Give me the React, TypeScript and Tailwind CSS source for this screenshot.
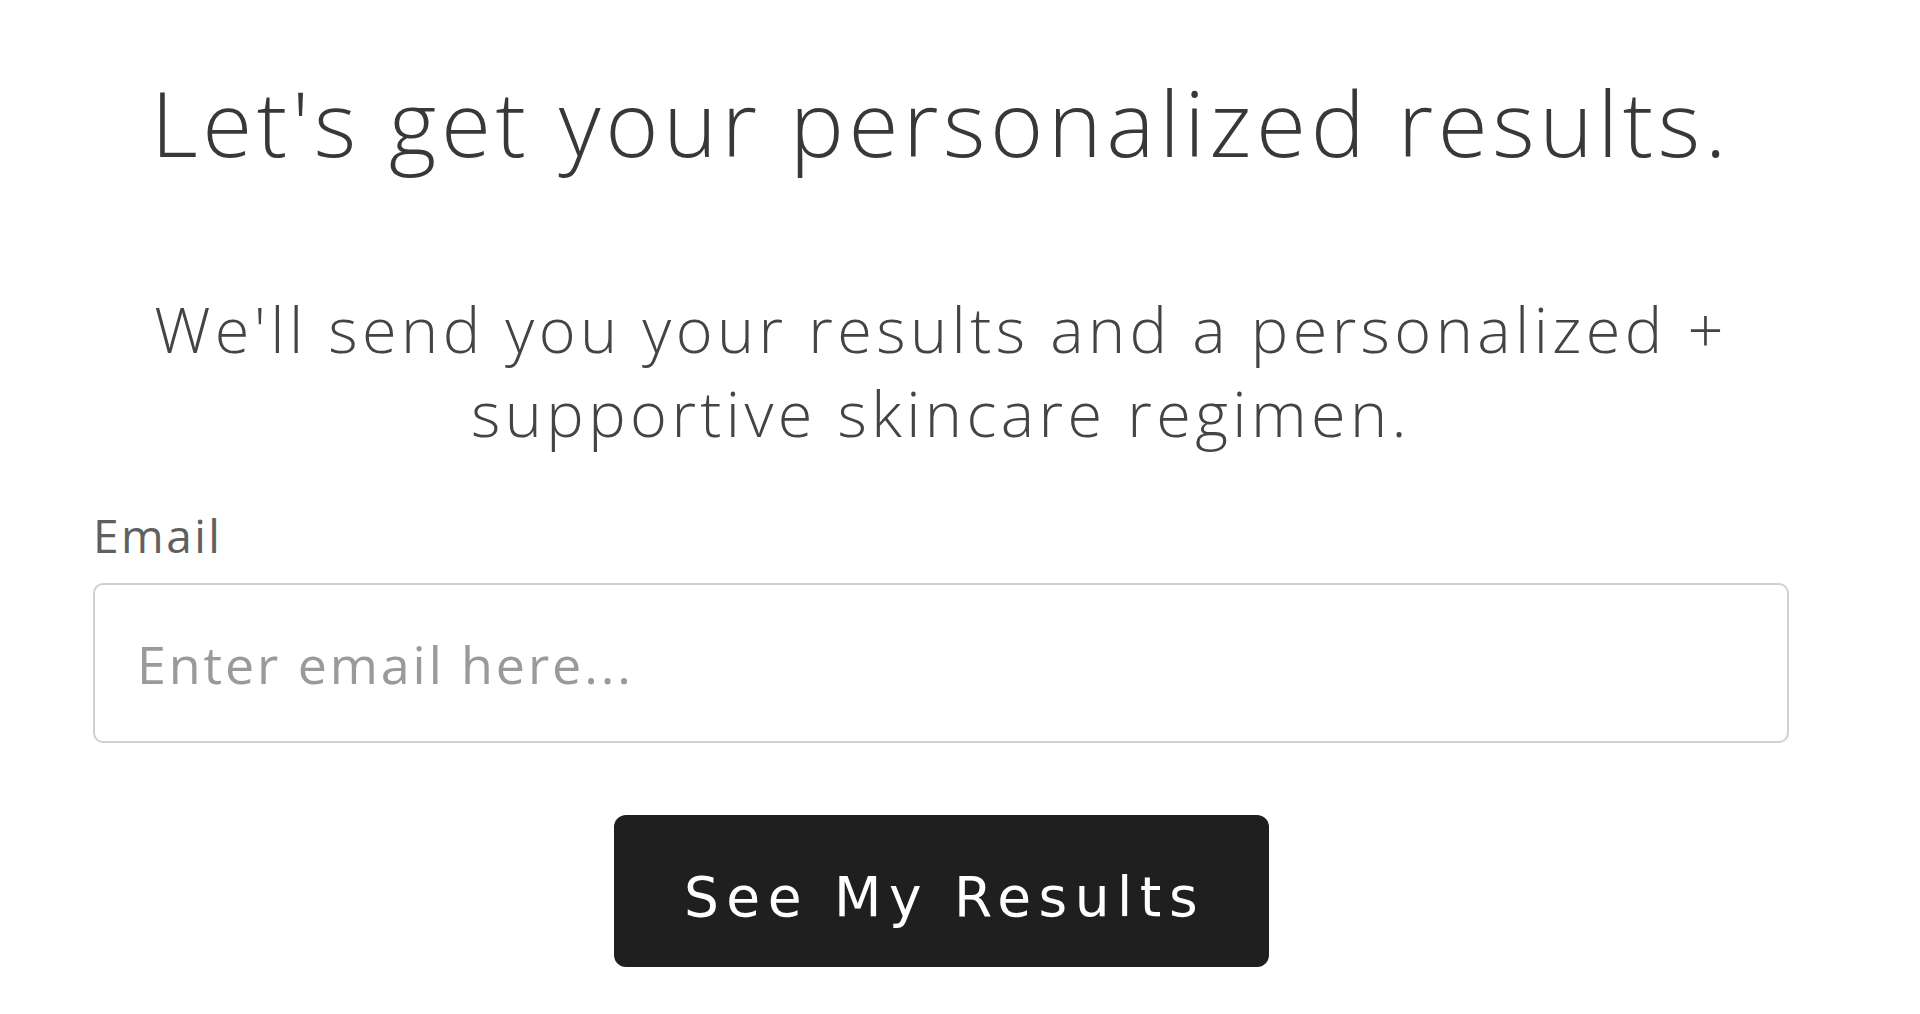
import React from "react";

export default function App() {
  return (
    <div className="min-h-[1014px] w-full bg-white" style={{ fontFamily: '"Open Sans", "Liberation Sans", sans-serif' }}>
      <div className="ml-[93px] w-[1696px] pt-[72px] flex flex-col">
        <h1 className="text-center text-[91px] leading-[100px] font-light tracking-[4.6px] text-[#383838] whitespace-nowrap">
          Let's get your personalized results.
        </h1>
        <p className="mt-[115px] text-center text-[63px] leading-[84px] font-light tracking-[4.4px] text-[#444444]">
          We'll send you your results and a personalized +
          <br />
          supportive skincare regimen.
        </p>
        <label className="mt-[52px] text-[46px] leading-[56px] tracking-[2.5px] text-[#606060]">Email</label>
        <input
          type="email"
          placeholder="Enter email here..."
          className="mt-[20px] h-[160px] w-full rounded-[10px] border-2 border-[#d0d0d0] bg-white pl-[42px] text-[52px] tracking-[2.9px] text-[#333] placeholder:text-[#9a9a9a] outline-none"
        />
        <div className="mt-[72px] flex justify-center">
          <button
            className="h-[152px] w-[655px] rounded-[12px] bg-[#1f1f1f] pl-[7px] pt-[12px] text-[55px] font-normal tracking-[7.5px] text-white"
            style={{ fontFamily: '"DejaVu Sans", "Open Sans", sans-serif' }}
          >
            See My Results
          </button>
        </div>
      </div>
    </div>
  );
}
